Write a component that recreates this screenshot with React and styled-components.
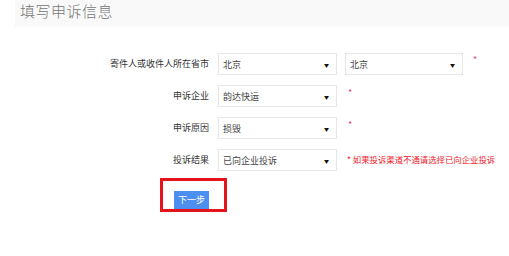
import styled, { createGlobalStyle } from "styled-components";

const GlobalStyle = createGlobalStyle`
  body {
    margin: 0;
    background: #fff;
    font-family: "Noto Sans CJK SC", "Noto Sans", sans-serif;
  }
`;

const Page = styled.div`
  width: 509px;
  height: 256px;
  overflow: hidden;
  background: #fff;
`;

const Header = styled.div`
  margin-left: 15px;
  height: 27px;
  background: #f9f9f9;
  padding-left: 5px;
  font-size: 15px;
  font-weight: 300;
  line-height: 22px;
  color: #777;
  letter-spacing: 0.5px;
`;

const Form = styled.div`
  margin-top: 26px;
  display: flex;
  flex-direction: column;
  gap: 10px;
`;

const Row = styled.div`
  display: flex;
  align-items: ${(p) => (p.$top ? "flex-start" : "center")};
  height: 22px;
`;

const Label = styled.div`
  width: 209px;
  text-align: right;
  font-size: 9px;
  color: #333;
  margin-right: 9px;
  line-height: 22px;
`;

const SelectBox = styled.div`
  box-sizing: border-box;
  width: ${(p) => p.$w || 119}px;
  height: 22px;
  border: 1px solid #e6e6e6;
  background: #fff;
  display: flex;
  align-items: center;
  justify-content: space-between;
  padding: 0 7px 0 4px;
  font-size: 9px;
  color: #444;
  margin-right: ${(p) => p.$mr || 0}px;
`;

const Arrow = styled.span`
  font-size: 5px;
  color: #111;
`;

const Star = styled.span`
  color: #e8436a;
  font-size: 9px;
  line-height: 1;
  margin-left: ${(p) => p.$ml}px;
  margin-top: ${(p) => p.$mt || 3}px;
`;

const Note = styled.span`
  margin-left: 10px;
  font-size: 8.4px;
  color: #f0202a;
  margin-top: -3px;
`;

const Mark = styled.div`
  margin: 7px 0 0 160px;
  width: 67px;
  height: 34px;
  box-sizing: border-box;
  border: 3px solid #e5141b;
  padding: 3px 0 0 11px;
`;

const NextButton = styled.button`
  width: 35px;
  height: 18px;
  border: 0;
  padding: 0;
  background: #4d8ff0;
  color: #fff;
  font-family: inherit;
  font-size: 9px;
  line-height: 18px;
`;

const Select = ({ value, w, mr }) => (
  <SelectBox $w={w} $mr={mr}>
    <span>{value}</span>
    <Arrow>▼</Arrow>
  </SelectBox>
);

const App = () => (
  <Page>
    <GlobalStyle />
    <Header>填写申诉信息</Header>
    <Form>
      <Row $top>
        <Label>寄件人或收件人所在省市</Label>
        <Select value="北京" mr={8} />
        <Select value="北京" w={118} />
        <Star $ml={10} $mt={2}>*</Star>
      </Row>
      <Row $top>
        <Label>申诉企业</Label>
        <Select value="韵达快运" />
        <Star $ml={11}>*</Star>
      </Row>
      <Row $top>
        <Label>申诉原因</Label>
        <Select value="损毁" />
        <Star $ml={11}>*</Star>
      </Row>
      <Row>
        <Label>投诉结果</Label>
        <Select value="已向企业投诉" />
        <Note>* 如果投诉渠道不通请选择已向企业投诉</Note>
      </Row>
    </Form>
    <Mark>
      <NextButton>下一步</NextButton>
    </Mark>
  </Page>
);

export default App;
